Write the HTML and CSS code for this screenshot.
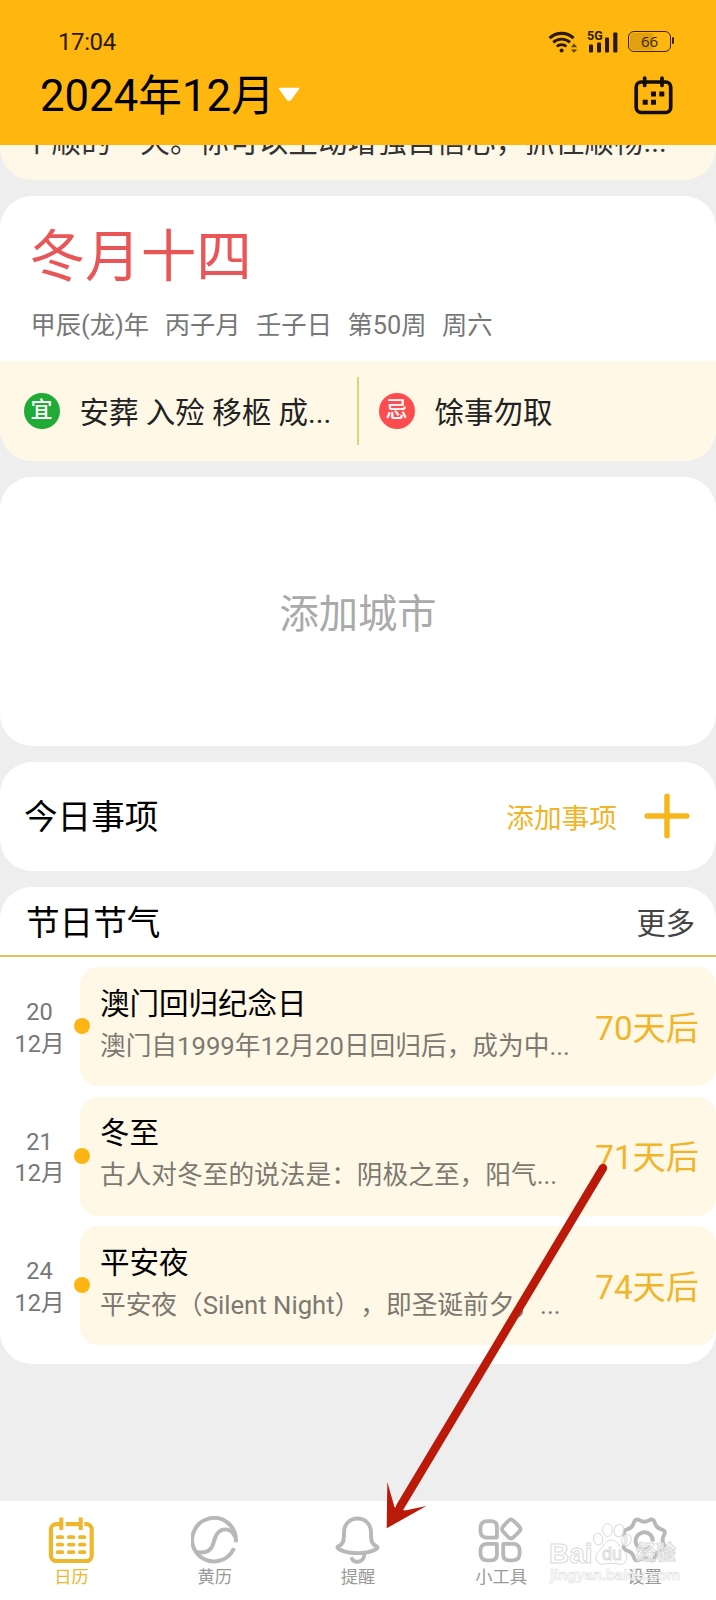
FILE: index.html
```html
<!DOCTYPE html>
<html lang="zh-CN">
<head>
<meta charset="utf-8">
<title>日历</title>
<link rel="stylesheet" href="styles.css">
</head>
<body>
<div class="screen">
  <header class="header">
    <div class="status">
      <span class="clock">17:04</span>
      <div class="status-icons">
        <svg class="wifi" viewBox="0 0 30 24" fill="none" stroke="#2b1a00">
          <path d="M1.6 8.200a17.500 17.500 0 0 1 24 0" stroke-width="3.200"/>
          <path d="M5.200 12.400a12.300 12.300 0 0 1 16.800 0" stroke-width="2.900"/>
          <path d="M8.800 16.500a7 7 0 0 1 9.600 0" stroke-width="2.600"/>
          <circle cx="13.600" cy="20.600" r="2" fill="#2b1a00" stroke="none"/>
          <path d="M26 13.600l3.200 3.600h-6.400zM26 22.800l3.200-3.400h-6.400z" fill="#5f4306" stroke="none"/>
        </svg>
        <div class="signal">
          <svg viewBox="0 0 32 24" fill="#2b1a00">
            <rect x="2" y="14.500" width="4" height="8" rx="1"/>
            <rect x="10" y="12.500" width="4" height="10" rx="1"/>
            <rect x="18" y="7.500" width="4" height="15" rx="1"/>
            <rect x="26.200" y="2.500" width="4.200" height="20" rx="1"/>
          </svg>
          <span class="net">5G</span>
        </div>
        <div class="battery"><span>66</span></div>
      </div>
    </div>
    <div class="titlebar">
      <h1>2024年12月</h1>
      <svg class="caret" viewBox="0 0 24 16"><path d="M2.500 1.500h19L13.500 12.500q-1.500 1.500-3 0z" fill="#fff" stroke="#fff" stroke-width="1.500" stroke-linejoin="round"/></svg>
      <svg class="cal" viewBox="0 0 42 42" fill="none" stroke="#140c00" stroke-width="3.700" stroke-linecap="round">
        <rect x="3.200" y="7" width="34.500" height="30.500" rx="5"/>
        <path d="M11.700 3v7.500M29 3v7.500"/>
        <path d="M18 16.600h5v5h-5zM26.300 16.600h5v5h-5zM9.700 24.800h5v5h-5zM18 24.800h5v5h-5z" fill="#140c00" stroke="none"/>
      </svg>
    </div>
  </header>

  <main class="feed">
    <section class="fortune"><p>个顺的一天。你可以主动增强自信心，抓住顺畅...</p></section>

    <section class="card almanac">
      <h2>冬月十四</h2>
      <div class="ganzhi"><span>甲辰(龙)年</span><span>丙子月</span><span>壬子日</span><span>第50周</span><span>周六</span></div>
      <div class="yiji">
        <div class="yi"><i class="seal good">宜</i><span>安葬 入殓 移柩 成...</span></div>
        <div class="ji"><i class="seal bad">忌</i><span>馀事勿取</span></div>
      </div>
    </section>

    <section class="card city">添加城市</section>

    <section class="card todo">
      <h3>今日事项</h3>
      <span class="add">添加事项</span>
      <svg viewBox="0 0 46 46" stroke="#f5b71c" stroke-width="5.500" stroke-linecap="round"><path d="M3.200 23h39.600M23 3.200v39.600"/></svg>
    </section>

    <section class="card festivals">
      <div class="fest-head"><h3>节日节气</h3><span>更多</span></div>
      <div class="event">
        <div class="date"><span>20</span><span>12月</span></div>
        <div class="event-card">
          <div class="event-text"><h4>澳门回归纪念日</h4><p>澳门自1999年12月20日回归后，成为中...</p></div>
          <span class="days">70天后</span>
        </div>
      </div>
      <div class="event">
        <div class="date"><span>21</span><span>12月</span></div>
        <div class="event-card">
          <div class="event-text"><h4>冬至</h4><p>古人对冬至的说法是：阴极之至，阳气...</p></div>
          <span class="days">71天后</span>
        </div>
      </div>
      <div class="event">
        <div class="date"><span>24</span><span>12月</span></div>
        <div class="event-card">
          <div class="event-text"><h4>平安夜</h4><p>平安夜（Silent Night），即圣诞前夕，...</p></div>
          <span class="days">74天后</span>
        </div>
      </div>
    </section>
  </main>

  <nav class="tabs">
    <div class="tab active">
      <svg viewBox="0.700 0.500 48 48" fill="none" stroke="#f0b62c" stroke-width="4.400">
        <path d="M13 8.700H9a5.400 5.400 0 0 0-5.400 5.400v26a5.400 5.400 0 0 0 5.400 5.400h30a5.400 5.400 0 0 0 5.400-5.400v-26A5.400 5.400 0 0 0 39 8.700h-2M18.500 8.700h15" stroke-width="4.200"/>
        <path d="M14 2v12.500M33.400 2v12.500" stroke-width="4"/>
        <path d="M10.400 21.700h4.500M21.600 21.700h4.500M32.600 21.700h4.500M10.400 29.200h4.500M21.600 29.200h4.500M32.600 29.200h4.500M10.400 36.700h4.500M21.600 36.700h4.500M32.600 36.700h4.500" stroke-width="3.800" stroke-linecap="round"/>
      </svg>
      <span>日历</span>
    </div>
    <div class="tab">
      <svg viewBox="0.500 0.300 48 48" fill="none" stroke="#b8b8b8" stroke-width="4" stroke-linecap="butt" stroke-linejoin="round">
        <path d="M45.200 26.500A21.800 21.800 0 1 0 5.500 36.300C12 37.500 19 37 22 30C24.500 23 25 17 31 14.500C36 12.500 41.500 14.500 44.500 21"/>
        <path d="M5.500 36.300A21.800 21.800 0 0 0 43.500 32.500"/>
      </svg>
      <span>黄历</span>
    </div>
    <div class="tab">
      <svg viewBox="0.500 0.500 48 48" fill="none" stroke="#b8b8b8" stroke-width="3.900" stroke-linecap="round" stroke-linejoin="round">
        <path d="M24 3C16 3 10.500 9 10.500 17C10.500 25 10.200 28.500 4.500 31C1.500 32.500 10 37.600 24 37.600S46.500 32.500 43.500 31C37.800 28.500 37.500 25 37.500 17C37.500 9 32 3 24 3Z"/>
        <path d="M18.500 43.300C21 48 29.500 47 30.800 40"/>
      </svg>
      <span>提醒</span>
    </div>
    <div class="tab">
      <svg viewBox="0.800 0.600 48 48" fill="none" stroke="#b8b8b8" stroke-width="3.800" stroke-linejoin="round">
        <path d="M11 5.800h4q5.700 0 5.700 5.700v10.700H11q-6.700 0-6.700-6.700v-3q0-6.700 6.700-6.700z"/>
        <path d="M32.200 5.400q2.600-2.400 5.200 0l5.600 5.600q2.600 2.600 0 5.200l-5.600 5.600q-2.600 2.600-5.200 0l-5.200-5.600q-2.600-2.600 0-5.200z"/>
        <path d="M11 28.500h9.700v10.700q0 5.700-5.700 5.700h-4q-6.700 0-6.700-6.700v-3q0-6.700 6.700-6.700z"/>
        <path d="M27 28.500h9.700q6.700 0 6.700 6.700v3q0 6.700-6.700 6.700h-4q-5.700 0-5.700-5.700z"/>
      </svg>
      <span>小工具</span>
    </div>
    <div class="tab">
      <svg viewBox="0.700 0.500 48 48" fill="none" stroke="#b8b8b8" stroke-width="3.900" stroke-linejoin="round">
        <path transform="translate(25 24.500)" d="M19.600 4.600Q22.200 9.200 17.100 10.600Q12 12 10.600 17.100Q9.200 22.200 4.600 19.600Q0 17-4.600 19.600Q-9.200 22.200-10.600 17.100Q-12 12-17.100 10.600Q-22.200 9.200-19.600 4.600Q-17 0-19.600-4.600Q-22.200-9.200-17.100-10.600Q-12-12-10.600-17.100Q-9.200-22.200-4.600-19.600Q0-17 4.600-19.600Q9.200-22.200 10.600-17.100Q12-12 17.100-10.600Q22.200-9.200 19.600-4.600Q17 0 19.600 4.600Z"/>
        <path d="M31.500 31A8.600 8.600 0 1 1 33.500 26"/>
      </svg>
      <span>设置</span>
    </div>
  </nav>

  <div class="watermark">
    <svg viewBox="0 0 130 64">
      <g fill="#fff" fill-opacity=".7" stroke="#d9d9d9" stroke-width="1">
        <ellipse cx="50" cy="25" rx="4.600" ry="6" transform="rotate(-12 50 25)"/>
        <ellipse cx="59.500" cy="16" rx="4.800" ry="6.500"/>
        <ellipse cx="71" cy="16.500" rx="4.800" ry="6.300" transform="rotate(8 71 16.500)"/>
        <ellipse cx="78.500" cy="26" rx="4.600" ry="6" transform="rotate(20 78.500 26)"/>
        <path d="M63 26c5 0 7 4 10 7.500s6 5.500 5.500 11-5 6.500-8.500 5.500-9.500-1-13 0-9-.5-9-6 3-7 6-10.500 4-7.500 9-7.500z"/>
      </g>
    </svg>
    <span class="wm-bai">Bai</span><span class="wm-du">du</span><span class="wm-cn">经验</span>
    <span class="wm-url">jingyan.baidu.com</span>
  </div>

  <svg class="pointer" viewBox="0 0 230 370">
    <path d="M223 8L20 347" stroke="#bb1a0a" stroke-width="8.400" stroke-linecap="round"/>
    <path d="M6.700 368.300L7.300 322L14.500 347L25 350.500L46.300 346Z" fill="#bb1a0a"/>
  </svg>
</div>
</body>
</html>
```
FILE: styles.css
```css
* { box-sizing: border-box; margin: 0; padding: 0; }
body {
  font-family: Roboto, "Noto Sans CJK SC", sans-serif;
  background: #eee;
  color: #000;
  text-spacing-trim: space-all;
}
h1, h2, h3, h4, i { font-weight: 400; font-style: normal; }
svg { display: block; flex: none; }
.screen {
  position: relative;
  width: 716px;
  height: 1600px;
  overflow: hidden;
  display: flex;
  flex-direction: column;
  white-space: nowrap;
}

/* header */
.header { height: 145px; flex: none; background: #ffb70f; padding: 24px 41px 0 40px; }
.status { height: 36px; display: flex; align-items: center; justify-content: space-between; padding-left: 18px; }
.clock { font-size: 24px; line-height: 36px; color: #2b1a00; letter-spacing: -.4px; }
.status-icons { display: flex; align-items: center; height: 24px; padding: 0 4px 1px 0; }
.wifi { width: 30px; height: 24px; }
.signal { position: relative; width: 32px; height: 24px; margin-left: 9px; }
.signal svg { width: 32px; height: 24px; }
.net { position: absolute; left: 0; top: 0; font-size: 12.500px; line-height: 12px; font-weight: 700; color: #2b1a00; background: #ffb70f; width: 16px; }
.battery {
  position: relative;
  width: 43px; height: 21px; margin-left: 9px;
  border: 1.700px solid #3a2500; border-radius: 6px;
  background: linear-gradient(90deg, #e0a00f 0 22px, #ffb70f 26px);
  background-clip: content-box; padding: 1px;
  font: 15px/17px "Open Sans", sans-serif; color: #3a2500; text-align: center;
}
.battery::after { content: ""; position: absolute; right: -4px; top: 5px; width: 2px; height: 7px; background: #3a2500; border-radius: 1px; }
.titlebar { display: flex; align-items: center; height: 70px; }
h1 { font-size: 43.700px; line-height: 70px; padding-top: 1px; }
.caret { width: 24px; height: 16px; margin-left: 2px; }
.cal { width: 42px; height: 42px; margin: 2px 0 0 auto; }

/* feed */
.feed { flex: 1; display: flex; flex-direction: column; gap: 16px; }
.fortune { height: 35px; overflow: hidden; background: #fff8e8; border-radius: 0 0 32px 32px; }
.fortune p { font-size: 29.600px; line-height: 40px; margin: -23px 0 0 22px; color: #333; }
.card { background: #fff; border-radius: 32px; overflow: hidden; }
.almanac { height: 265px; display: flex; flex-direction: column; }
h2 { font-size: 55.600px; line-height: 80px; margin: 20.500px 0 0 29.500px; color: #e85657; }
.ganzhi { display: flex; gap: 15.500px; margin: 11.500px 0 0 30.500px; font-size: 25.300px; line-height: 36px; color: #777; }
.yiji { margin-top: auto; height: 100px; background: #fff8e7; display: flex; align-items: center; font-size: 29.500px; color: #222; }
.yi, .ji { display: flex; align-items: center; height: 68px; }
.yi > span, .ji > span { padding-bottom: 3px; }
.yi { width: 359px; padding-left: 23.500px; border-right: 2px solid #e3d183; }
.ji { padding-left: 19.500px; }
.seal { width: 36px; height: 36px; border-radius: 50%; color: #fff; font-size: 22px; line-height: 34px; font-weight: 500; text-align: center; margin-right: 20px; }
.good { background: #20ab36; }
.bad { background: #ff4c4f; }
.city { height: 268.500px; display: flex; align-items: center; justify-content: center; font-size: 39.300px; padding-bottom: 2px; color: #aaa; }
.todo { height: 109.500px; display: flex; align-items: center; padding: 0 26px 0 24px; }
h3 { font-size: 33.600px; line-height: 48px; padding-top: 4px; }
.add { margin-left: auto; font-size: 27.700px; color: #f0b52a; padding-bottom: 1px; }
.todo svg { width: 46px; height: 46px; margin-left: 27px; }
.festivals { height: 477px; }
.fest-head { height: 70px; display: flex; align-items: center; justify-content: space-between; padding: 2px 21px 0 26px; border-bottom: 2px solid #dfc25c; }
.fest-head span { font-size: 29.300px; color: #444; padding-bottom: 2px; }
.event { display: flex; height: 119px; margin-top: 10.500px; }
.event:nth-child(2) { margin-top: 10px; }
.date { width: 79px; flex: none; display: flex; flex-direction: column; align-items: center; padding-top: 30px; font-size: 23.600px; line-height: 31.500px; color: #777; }
.event-card { position: relative; flex: 1; display: flex; align-items: center; justify-content: space-between; background: #fff8e7; border-radius: 18px; padding: 0 17px 4px 20px; margin-left: 1px; }
.event-card::before { content: ""; position: absolute; left: -6.500px; top: 51px; width: 16px; height: 16px; border-radius: 50%; background: #fdb515; }
h4 { font-size: 29.500px; line-height: 42px; }
.event-text p { font-size: 25.700px; line-height: 42px; color: #7d7870; }
.days { font-size: 33.200px; color: #f0b52a; margin-top: 1px; }

/* bottom tabs */
.tabs { height: 99px; flex: none; display: flex; background: #fff; padding-top: 15px; }
.tab { flex: 1; display: flex; flex-direction: column; align-items: center; font-size: 17.300px; line-height: 27px; color: #999; }
.tab svg { width: 48px; height: 48px; }
.tab.active { color: #f0b62c; }

/* overlays */
.watermark { position: absolute; left: 548px; top: 1514px; width: 130px; height: 75px; color: rgba(255,255,255,.65); -webkit-text-stroke: 1px #dadada; font-family: "Liberation Sans", "Noto Sans CJK SC", sans-serif; }
.watermark svg { width: 130px; height: 64px; }
.watermark span { position: absolute; line-height: 1; }
.wm-bai { left: 1px; top: 26px; font-size: 28px; font-weight: 700; }
.wm-du { left: 54px; top: 31px; font-size: 18px; }
.wm-cn { left: 88px; top: 29px; font-size: 20px; font-weight: 700; }
.watermark .wm-url { left: 2px; top: 54px; font-size: 14.800px; font-weight: 700; -webkit-text-stroke: .7px #e2e2e2; }
.pointer { position: absolute; left: 380px; top: 1160px; width: 230px; height: 370px; }
```
